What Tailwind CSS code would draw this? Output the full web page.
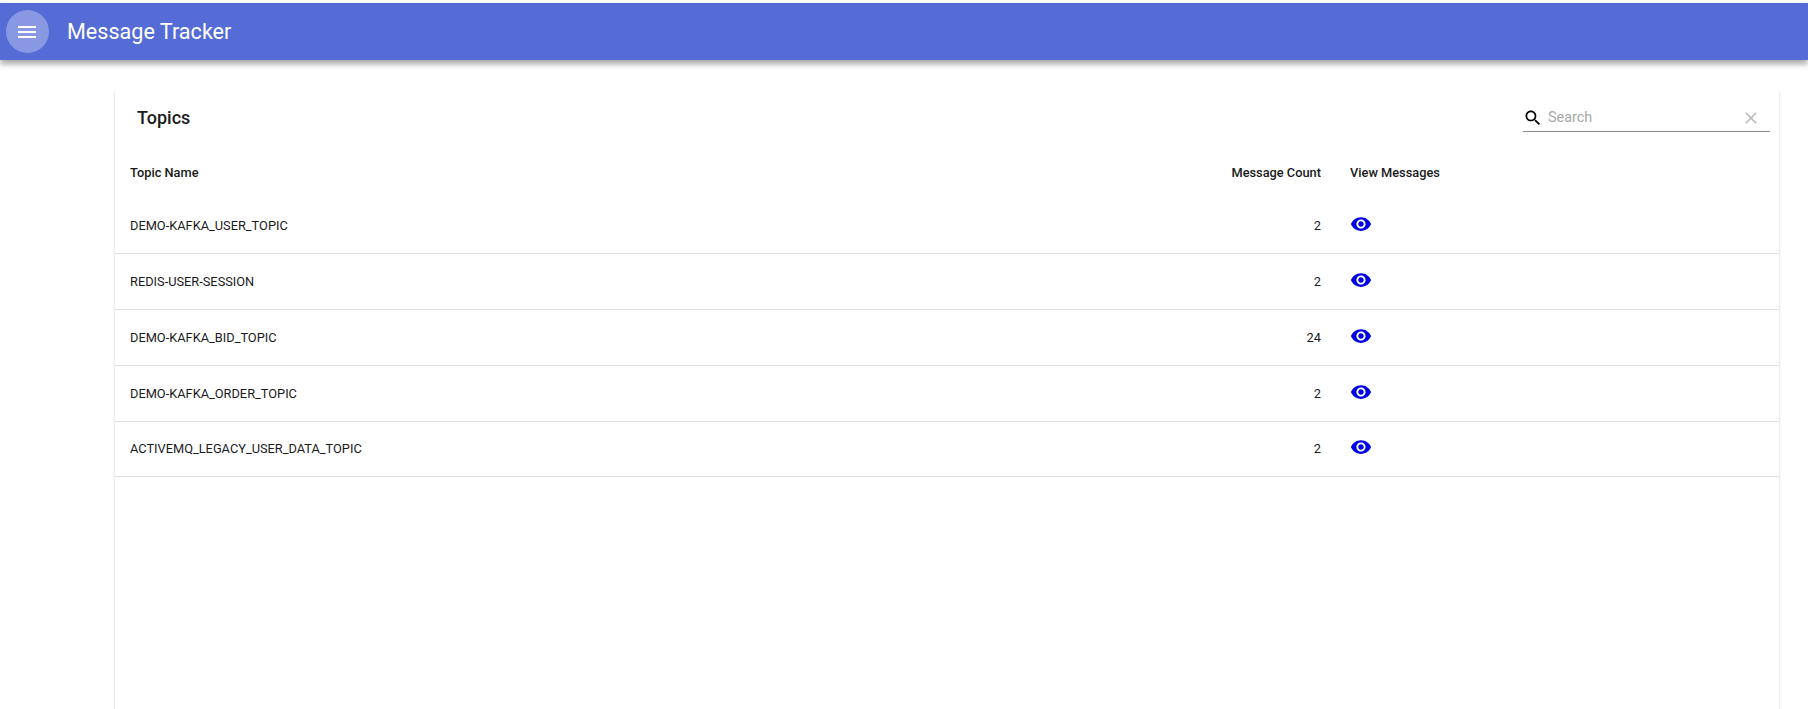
<!DOCTYPE html>
<html lang="en">
<head>
  <meta charset="UTF-8">
  <title>Message Tracker</title>
  <script src="https://cdn.jsdelivr.net/npm/@tailwindcss/browser@4"></script>
</head>
<body class="bg-white text-[#1a1a1a] font-['Roboto',sans-serif] h-[709px] overflow-hidden">
  <!-- Header -->
  <header class="mt-[3px] h-[57px] bg-[#556cd6] flex items-center shadow-[0_4px_6px_rgba(0,0,0,0.35)] relative">
    <button class="ml-[6px] w-[43px] h-[43px] rounded-full bg-white/30 flex items-center justify-center">
      <svg class="w-6 h-6 text-white -ml-[1px]" fill="currentColor" viewBox="0 0 24 24"><path d="M3 18h18v-2H3v2zm0-5h18v-2H3v2zm0-7v2h18V6H3z"/></svg>
    </button>
    <h1 class="ml-[18px] pt-[2px] text-[21.6px] text-white">Message Tracker</h1>
  </header>

  <!-- Main -->
  <main class="mt-[28px] ml-[115px] w-[1664px] h-[621px] bg-white rounded-t shadow-[0_2px_3px_rgba(0,0,0,0.2)]">
    <div class="h-[59px] pl-[22px] pr-[9px] flex items-center justify-between">
      <h2 class="text-[18px] font-medium">Topics</h2>
      <div class="w-[247px] h-[28px] pt-[2px] flex items-center border-b-[1.5px] border-[#8a8a8a]">
        <svg class="w-5 h-5 text-black" fill="currentColor" viewBox="0 0 24 24"><path d="M15.5 14h-.79l-.28-.27C15.41 12.59 16 11.11 16 9.5 16 5.91 13.09 3 9.5 3S3 5.91 3 9.5 5.91 16 9.5 16c1.61 0 3.09-.59 4.23-1.57l.27.28v.79l5 4.99L20.49 19l-4.99-5zm-6 0C7.01 14 5 11.99 5 9.5S7.01 5 9.5 5 14 7.01 14 9.5 11.99 14 9.5 14z"/></svg>
        <span class="ml-[5px] flex-1 text-[14.4px] text-[#a8a8a8]">Search</span>
        <svg class="w-5 h-5 mr-[9px] text-[#bdbdbd]" fill="currentColor" viewBox="0 0 24 24"><path d="M19 6.41L17.59 5 12 10.59 6.41 5 5 6.41 10.59 12 5 17.59 6.41 19 12 13.41 17.59 19 19 17.59 13.41 12z"/></svg>
      </div>
    </div>

    <div class="h-[51.5px] pb-[1px] flex items-center text-[12.8px] font-medium">
      <div class="pl-[15px] w-[1000px]">Topic Name</div>
      <div class="w-[206px] text-right">Message Count</div>
      <div class="ml-[29px]">View Messages</div>
    </div>

    <div id="rows"></div>
  </main>

  <script>
    const topics = [
      ["DEMO-KAFKA_USER_TOPIC", 2],
      ["REDIS-USER-SESSION", 2],
      ["DEMO-KAFKA_BID_TOPIC", 24],
      ["DEMO-KAFKA_ORDER_TOPIC", 2],
      ["ACTIVEMQ_LEGACY_USER_DATA_TOPIC", 2]
    ];
    document.getElementById("rows").innerHTML = topics.map(t => `
      <div class="h-[55.75px] flex items-center text-[12.8px] border-b border-[#e0e0e0]">
        <div class="pl-[15px] w-[1000px]">${t[0]}</div>
        <div class="w-[206px] text-right">${t[1]}</div>
        <div class="ml-[29px] -mt-[3px]">
          <svg class="w-[22px] h-[22px] text-[#0000e6]" fill="currentColor" viewBox="0 0 24 24"><path d="M12 4.5C7 4.5 2.73 7.61 1 12c1.73 4.39 6 7.5 11 7.5s9.27-3.11 11-7.5c-1.73-4.39-6-7.5-11-7.5zM12 17c-2.76 0-5-2.24-5-5s2.24-5 5-5 5 2.24 5 5-2.24 5-5 5zm0-8c-1.66 0-3 1.34-3 3s1.34 3 3 3 3-1.34 3-3-1.34-3-3-3z"/></svg>
        </div>
      </div>`).join("");
  </script>
</body>
</html>
